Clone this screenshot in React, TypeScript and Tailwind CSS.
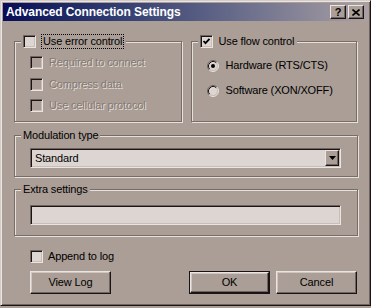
import React from 'react'

const font = "font-['Liberation_Sans',Arial,sans-serif]"

function Check({ checked = false, disabled = false }: { checked?: boolean; disabled?: boolean }) {
  return (
    <span
      className={
        disabled
          ? 'flex h-[13px] w-[13px] shrink-0 items-center justify-center border border-t-[#6e6460] border-l-[#6e6460] border-r-[#ebe5e2] border-b-[#ebe5e2] bg-[#aa9e96] shadow-[inset_1px_1px_0_#1c1414,inset_-1px_-1px_0_#c8beb8]'
          : 'flex h-[13px] w-[13px] shrink-0 items-center justify-center border border-t-[#6e6460] border-l-[#6e6460] border-r-[#ebe5e2] border-b-[#ebe5e2] bg-[#ddd5d1] shadow-[inset_1px_1px_0_#1c1414,inset_-1px_-1px_0_#c8beb8]'
      }
    >
      {checked && (
        <svg width="9" height="9" viewBox="0 0 9 9">
          <polyline points="1.5,4 3.5,6.2 7.5,1.8" fill="none" stroke="#000" strokeWidth="1.8" />
        </svg>
      )}
    </span>
  )
}

function Radio({ checked = false }: { checked?: boolean }) {
  return (
    <svg width="12" height="12" viewBox="0 0 12 12" className="shrink-0">
      <circle cx="6" cy="6" r="5" fill="#ddd5d1" />
      <path d="M2.11 9.89 A5.5 5.5 0 0 1 9.89 2.11" fill="none" stroke="#6e6460" />
      <path d="M2.82 9.18 A4.5 4.5 0 0 1 9.18 2.82" fill="none" stroke="#1c1414" />
      <path d="M9.89 2.11 A5.5 5.5 0 0 1 2.11 9.89" fill="none" stroke="#ebe5e2" />
      <path d="M9.18 2.82 A4.5 4.5 0 0 1 2.82 9.18" fill="none" stroke="#c8beb8" />
      {checked && <circle cx="6" cy="6" r="2" fill="#000" />}
    </svg>
  )
}

function Group({
  label,
  className,
  children,
}: {
  label: React.ReactNode
  className: string
  children?: React.ReactNode
}) {
  return (
    <div
      className={`flex flex-col border border-[#776d67] shadow-[1px_1px_0_#e8e0dc,inset_1px_1px_0_#e8e0dc] ${className}`}
    >
      <div className="-mt-[7px] ml-[6px] flex h-[13px] items-center gap-[5px] self-start bg-[#aa9e96] px-[2px]">
        {label}
      </div>
      {children}
    </div>
  )
}

function Disabled({ children }: { children: React.ReactNode }) {
  return <span className="text-[#857a73] [text-shadow:1px_1px_0_#e6dfdb]">{children}</span>
}

function Button({ children, isDefault = false }: { children: React.ReactNode; isDefault?: boolean }) {
  const face = (
    <span className="flex h-full w-full items-center justify-center border border-t-[#ebe5e2] border-l-[#ebe5e2] border-r-[#1c1414] border-b-[#1c1414] bg-[#aa9e96] shadow-[inset_-1px_-1px_0_#6e6460,inset_1px_1px_0_#cfc6c1]">
      {children}
    </span>
  )
  if (isDefault)
    return (
      <button type="button" className="h-[23px] w-[81px] border border-[#1c1414]">
        {face}
      </button>
    )
  return (
    <button type="button" className="h-[23px] w-[81px]">
      {face}
    </button>
  )
}

export default function App() {
  return (
    <div className="h-[308px] w-[371px] bg-[#aa9e96]">
      <div
        className={`${font} h-[306px] w-[371px] border border-t-[#d4ccc8] border-l-[#d4ccc8] border-r-[#1c1414] border-b-[#1c1414] bg-[#aa9e96] p-[2px] text-[11px] leading-[13px] tracking-[-0.15px] text-black shadow-[inset_1px_1px_0_#ebe5e2,inset_-1px_-1px_0_#6e6460]`}
      >
        {/* title bar */}
        <div className="flex h-[18px] items-center bg-linear-to-r from-[#0a0a56] to-[#aaa0a4] pl-[3px] pr-[4px]">
          <span className="flex-1 text-[12px] font-bold tracking-[-0.1px] text-white">
            Advanced Connection Settings
          </span>
          <div className="flex gap-[2px]">
            <span className="flex h-[14px] w-[16px] items-center justify-center border border-t-[#ebe5e2] border-l-[#ebe5e2] border-r-[#1c1414] border-b-[#1c1414] bg-[#aa9e96] text-[11px] font-bold shadow-[inset_-1px_-1px_0_#6e6460]">
              ?
            </span>
            <span className="flex h-[14px] w-[16px] items-center justify-center border border-t-[#ebe5e2] border-l-[#ebe5e2] border-r-[#1c1414] border-b-[#1c1414] bg-[#aa9e96] shadow-[inset_-1px_-1px_0_#6e6460]">
              <svg width="8" height="7" viewBox="0 0 8 7">
                <path d="M0.5 0.5 L7.5 6.5 M7.5 0.5 L0.5 6.5" stroke="#000" strokeWidth="1.6" />
              </svg>
            </span>
          </div>
        </div>

        <div className="flex flex-col px-[11px] pt-[20px]">
          <div className="flex gap-[9px]">
            <Group
              className="h-[81px] w-[168px]"
              label={
                <>
                  <Check />
                  <span className="border border-dotted border-black px-[1px]">Use error control</span>
                </>
              }
            >
              <div className="ml-[15px] mt-[8px] flex flex-col">
                <div className="flex h-[13px] items-center gap-[6px]">
                  <Check disabled />
                  <Disabled>Required to connect</Disabled>
                </div>
                <div className="mt-[9px] flex h-[13px] items-center gap-[6px]">
                  <Check disabled />
                  <Disabled>Compress data</Disabled>
                </div>
                <div className="mt-[8px] flex h-[13px] items-center gap-[6px]">
                  <Check disabled />
                  <Disabled>Use cellular protocol</Disabled>
                </div>
              </div>
            </Group>
            <Group
              className="h-[81px] w-[167px]"
              label={
                <>
                  <Check checked />
                  <span className="px-[1px]">Use flow control</span>
                </>
              }
            >
              <div className="ml-[15px] mt-[11px] flex flex-col">
                <div className="flex h-[13px] items-center gap-[7px]">
                  <Radio checked />
                  <span>Hardware (RTS/CTS)</span>
                </div>
                <div className="mt-[12px] flex h-[13px] items-center gap-[7px]">
                  <Radio />
                  <span>Software (XON/XOFF)</span>
                </div>
              </div>
            </Group>
          </div>

          <Group className="mt-[13px] h-[42px] w-[344px]" label={<span>Modulation type</span>}>
            <div className="ml-[15px] mt-[6px] flex h-[20px] w-[311px] items-center border border-t-[#6e6460] border-l-[#6e6460] border-r-[#ebe5e2] border-b-[#ebe5e2] bg-[#ddd5d1] p-[1px] shadow-[inset_1px_1px_0_#1c1414,inset_-1px_-1px_0_#c8beb8]">
              <span className="flex-1 pl-[3px]">Standard</span>
              <span className="flex h-[16px] w-[14px] items-center justify-center border border-t-[#ebe5e2] border-l-[#ebe5e2] border-r-[#1c1414] border-b-[#1c1414] bg-[#aa9e96] shadow-[inset_-1px_-1px_0_#6e6460]">
                <svg width="7" height="4" viewBox="0 0 7 4">
                  <path d="M0 0 H7 L3.5 4 Z" fill="#000" />
                </svg>
              </span>
            </div>
          </Group>

          <Group className="mt-[12px] h-[47px] w-[344px]" label={<span>Extra settings</span>}>
            <div className="ml-[15px] mt-[9px] h-[20px] w-[311px] border border-t-[#6e6460] border-l-[#6e6460] border-r-[#ebe5e2] border-b-[#ebe5e2] bg-[#ddd5d1] shadow-[inset_1px_1px_0_#1c1414,inset_-1px_-1px_0_#c8beb8]" />
          </Group>

          <div className="ml-[16px] mt-[14px] flex h-[13px] items-center gap-[5px]">
            <Check />
            <span>Append to log</span>
          </div>

          <div className="mt-[8px] flex pl-[16px]">
            <Button>View Log</Button>
            <div className="flex-1" />
            <div className="flex gap-[6px]">
              <Button isDefault>OK</Button>
              <Button>Cancel</Button>
            </div>
          </div>
        </div>
      </div>
    </div>
  )
}
